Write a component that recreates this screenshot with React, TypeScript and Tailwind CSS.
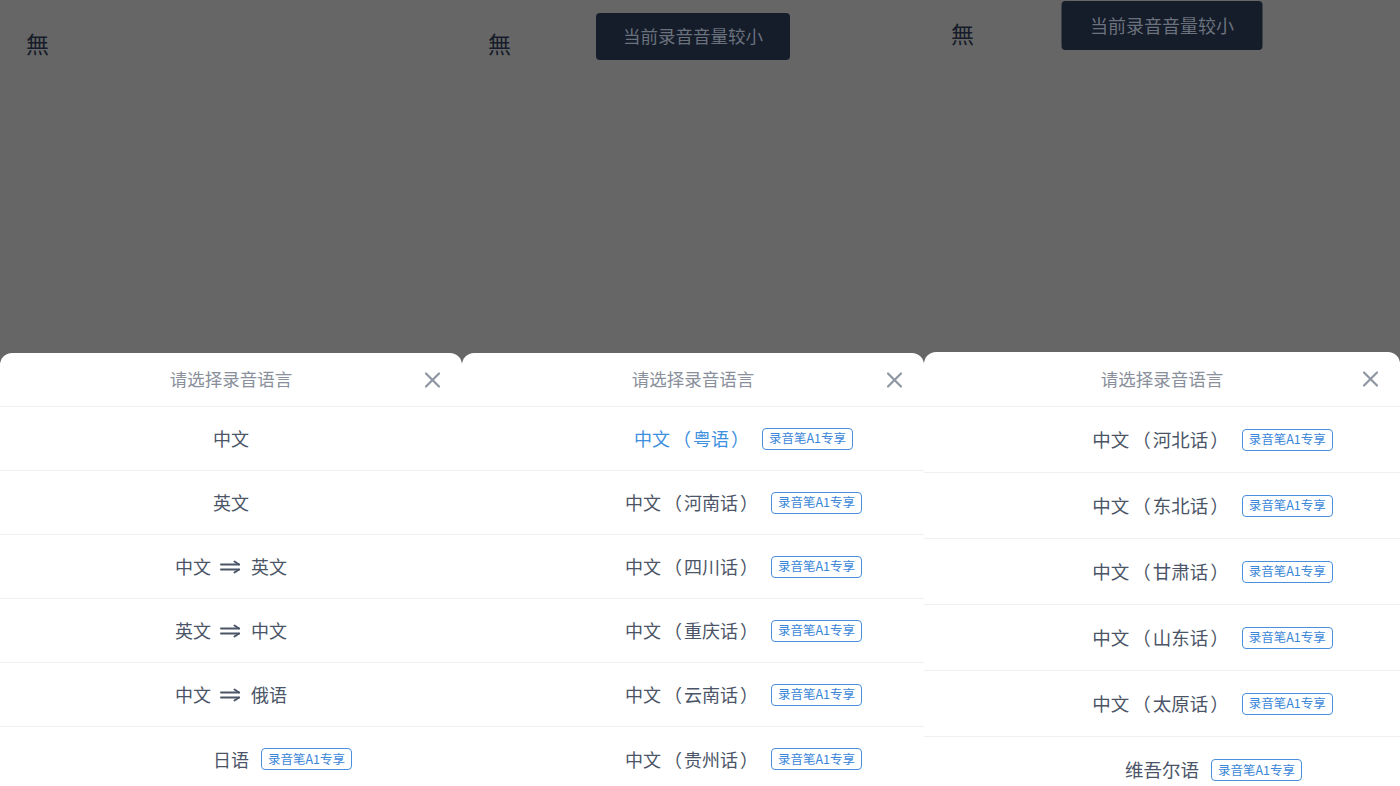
import type { ReactNode } from 'react'

type Row = { label: ReactNode; badge?: boolean; active?: boolean; tight?: boolean }

const FONT = { fontFamily: '"Noto Sans CJK SC", "Noto Sans", sans-serif' }

function Arrow() {
  return (
    <svg width="22" height="14" viewBox="0 0 22 14" className="mx-[9px]">
      <g stroke="#4b5567" strokeWidth="2" fill="none" strokeLinecap="round">
        <path d="M1 4.5h18M1 9.5h18" />
        <path d="M14.5 1.5l4.5 3M14.5 12.5l4.5-3" />
      </g>
    </svg>
  )
}

function Pair({ from, to }: { from: string; to: string }) {
  return (
    <span className="inline-flex items-center">
      {from}
      <Arrow />
      {to}
    </span>
  )
}

// 中文（xx话） with the wider full-width brackets of the original
function Dialect({ name }: { name: string }) {
  return (
    <span className="inline-flex items-center">
      中文<span className="pl-[3px] pr-[2px]">（</span>
      {name}
      <span className="pl-[2px] pr-[3px]">）</span>
    </span>
  )
}

function Badge({ tight }: { tight?: boolean }) {
  return (
    <span
      className={`${tight ? 'ml-[10px]' : 'ml-[12px]'} inline-flex h-[22px] w-[91px] items-center justify-center rounded-[4px] border-[1.5px] border-[#4a8fdc] text-[12.5px] text-[#3a86d8]`}
    >
      录音笔A1专享
    </span>
  )
}

function CloseIcon() {
  return (
    <svg width="17" height="17" viewBox="0 0 17 17">
      <path d="M2 2l13 13M15 2L2 15" stroke="#8e96a3" strokeWidth="2.2" strokeLinecap="round" />
    </svg>
  )
}

function Panel({
  rows,
  toast,
  big,
}: {
  rows: Row[]
  toast?: 'mid' | 'top'
  big?: boolean
}) {
  const w = big ? 'w-[476px]' : 'w-[462px]'
  const rowH = big ? 'h-[66px] text-[18.5px]' : 'h-[64px] text-[18px]'
  return (
    <div className={`relative flex h-[786px] ${w} shrink-0 flex-col overflow-hidden bg-[#666666]`}>
      {/* page behind the mask */}
      <div className={big ? 'h-[352px] shrink-0' : 'h-[353px] shrink-0'}>
        <div className={big ? 'pl-[27px] pt-[16px] text-[23px] text-[#161c2a]' : 'pl-[26px] pt-[26px] text-[23px] text-[#161c2a]'}>
          無
        </div>
      </div>

      {toast && (
        <div
          className={
            toast === 'mid'
              ? 'absolute left-1/2 top-[13px] flex h-[47px] w-[194px] -translate-x-1/2 items-center justify-center rounded-[4px] bg-[#151c2a] text-[17.5px] text-[#6b727d]'
              : 'absolute left-1/2 top-[1px] flex h-[49px] w-[201px] -translate-x-1/2 items-center justify-center rounded-[4px] bg-[#151c2a] text-[18px] text-[#6b727d]'
          }
        >
          当前录音音量较小
        </div>
      )}

      {/* sheet */}
      <div className="flex flex-col rounded-t-[12px] bg-white">
        <div
          className={`relative flex ${big ? 'h-[55px]' : 'h-[54px]'} items-center justify-center border-b border-[#eef0f2] text-[17.5px] text-[#8a909b]`}
        >
          请选择录音语言
          <span className="absolute right-[21px] top-1/2 -translate-y-1/2">
            <CloseIcon />
          </span>
        </div>
        {rows.map((r, i) => (
          <div
            key={i}
            className={`grid ${rowH} shrink-0 grid-cols-[1fr_auto_1fr] items-center ${
              i < rows.length - 1 ? 'border-b border-[#eef0f2]' : ''
            } ${r.active ? 'text-[#3d8fe0]' : 'text-[#4b5567]'}`}
          >
            <span />
            <span className="flex items-center">{r.label}</span>
            <span className="flex items-center">{r.badge && <Badge tight={r.tight} />}</span>
          </div>
        ))}
      </div>
    </div>
  )
}

export default function App() {
  const first: Row[] = [
    { label: '中文' },
    { label: '英文' },
    { label: <Pair from="中文" to="英文" /> },
    { label: <Pair from="英文" to="中文" /> },
    { label: <Pair from="中文" to="俄语" /> },
    { label: '日语', badge: true },
  ]
  const second: Row[] = [
    { label: <Dialect name="粤语" />, badge: true, active: true, tight: true },
    { label: <Dialect name="河南话" />, badge: true, tight: true },
    { label: <Dialect name="四川话" />, badge: true, tight: true },
    { label: <Dialect name="重庆话" />, badge: true, tight: true },
    { label: <Dialect name="云南话" />, badge: true, tight: true },
    { label: <Dialect name="贵州话" />, badge: true, tight: true },
  ]
  const third: Row[] = [
    { label: <Dialect name="河北话" />, badge: true, tight: true },
    { label: <Dialect name="东北话" />, badge: true, tight: true },
    { label: <Dialect name="甘肃话" />, badge: true, tight: true },
    { label: <Dialect name="山东话" />, badge: true, tight: true },
    { label: <Dialect name="太原话" />, badge: true, tight: true },
    { label: '维吾尔语', badge: true },
  ]

  return (
    <main className="flex h-[786px] w-[1400px] overflow-hidden bg-[#666666]" style={FONT}>
      <Panel rows={first} />
      <Panel rows={second} toast="mid" />
      <Panel rows={third} toast="top" big />
    </main>
  )
}
